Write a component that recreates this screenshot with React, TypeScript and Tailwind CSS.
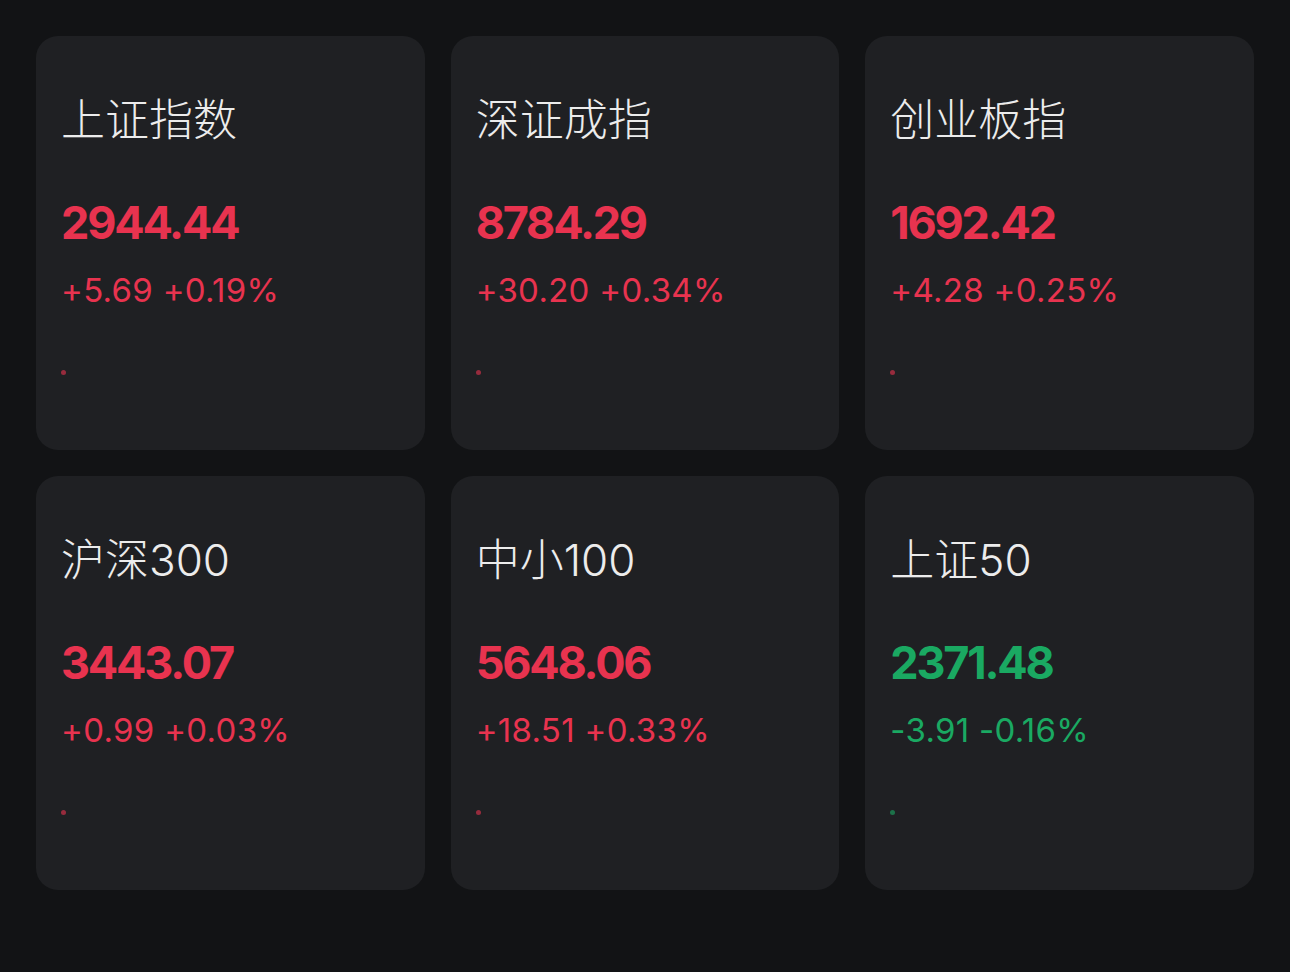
const indices = [
  { name: '上证指数', price: '2944.44', change: '+5.69', pct: '+0.19%', up: true },
  { name: '深证成指', price: '8784.29', change: '+30.20', pct: '+0.34%', up: true },
  { name: '创业板指', price: '1692.42', change: '+4.28', pct: '+0.25%', up: true },
  { name: '沪深300', price: '3443.07', change: '+0.99', pct: '+0.03%', up: true },
  { name: '中小100', price: '5648.06', change: '+18.51', pct: '+0.33%', up: true },
  { name: '上证50', price: '2371.48', change: '-3.91', pct: '-0.16%', up: false },
];

function IndexCard({ item }: { item: (typeof indices)[number] }) {
  const color = item.up ? 'text-[#e8334f]' : 'text-[#1aa962]';
  return (
    <div className="h-[414px] rounded-[22px] bg-[#1f2023] pl-[25px] pt-[62px] flex flex-col">
      <div
        className="text-[44px] leading-none font-light text-[#ececec]"
        style={{ fontFamily: 'Inter, "Noto Sans CJK SC", sans-serif' }}
      >
        {item.name}
      </div>
      <div className={`mt-[58px] text-[45px] leading-none font-bold tracking-[-2.2px] ${color}`} style={{ fontFamily: 'Inter, sans-serif' }}>
        {item.price}
      </div>
      <div className={`mt-[29px] text-[33px] leading-none font-normal tracking-[0.3px] ${color}`} style={{ fontFamily: 'Inter, sans-serif' }}>
        {item.change} {item.pct}
      </div>
      <div className={`mt-[63px] w-[5px] h-[5px] rounded-full ${item.up ? 'bg-[#e8334f]/60' : 'bg-[#1aa962]/60'}`} />
    </div>
  );
}

export default function App() {
  return (
    <div className="w-[1290px] h-[972px] bg-[#121315] px-[36px] pt-[36px]">
      <div className="grid grid-cols-3 gap-[26px]">
        {indices.map((item) => (
          <IndexCard key={item.name} item={item} />
        ))}
      </div>
    </div>
  );
}
